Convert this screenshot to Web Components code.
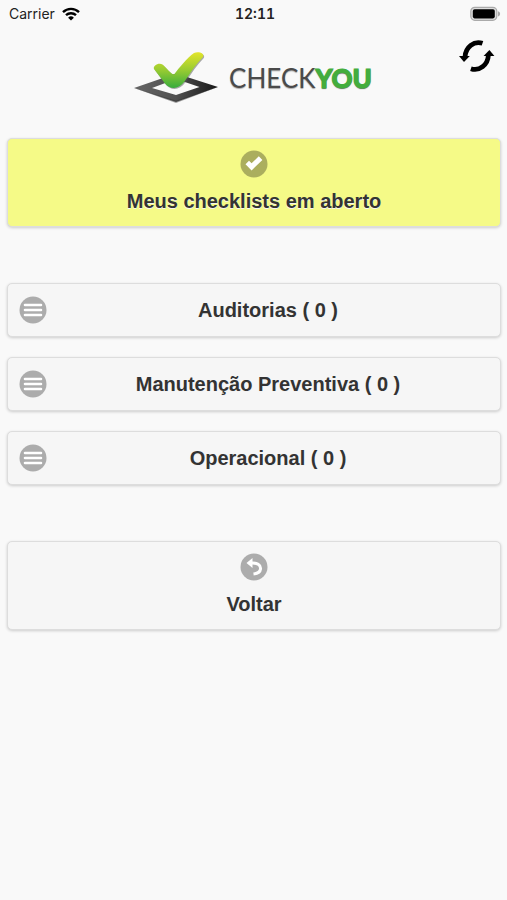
<!DOCTYPE html>
<html lang="pt-BR">
<head>
<meta charset="utf-8">
<meta name="viewport" content="width=device-width, initial-scale=1">
<title>CheckYou</title>
<style>
  body {
    margin: 0;
    min-height: 100vh;
    background: #f9f9f9;
    color: #333;
    font-family: "Liberation Sans", Arial, sans-serif;
  }
</style>
</head>
<body>
<checklist-page></checklist-page>

<script>
class StatusBar extends HTMLElement {
    connectedCallback() {
        this.attachShadow({ mode: 'open' });
        this.shadowRoot.innerHTML = `
      <style>
        :host {
          display: grid;
          grid-template-columns: 1fr auto 1fr;
          align-items: center;
          height: 28px;
          padding: 0 6px 0 9px;
          color: #222;
          font: 14px/28px Inter, sans-serif;
        }

        .carrier {
          display: flex;
          align-items: center;
          gap: 7px;
        }

        .time {
          font-weight: 600;
          font-variant-numeric: tabular-nums;
        }

        .battery {
          justify-self: end;
        }

        svg {
          display: block;
        }
      </style>

      <div class="carrier">
        <span>Carrier</span>
        <svg width="18" height="14" viewBox="0 0 18 14" fill="none" stroke="#000" stroke-width="2.4">
          <path d="M1 5.1a11.5 11.5 0 0 1 16 0"/>
          <path d="M4 8.2a7.2 7.2 0 0 1 10 0"/>
          <path d="M9 13.6 6.1 10.7a4.1 4.1 0 0 1 5.8 0Z" fill="#000" stroke="none"/>
        </svg>
      </div>
      <span class="time">12:11</span>
      <svg class="battery" width="31" height="16" viewBox="0 0 31 16">
        <rect x=".8" y="1.3" width="26" height="13" rx="4" fill="#ddd" stroke="#aaa" stroke-width="1.2"/>
        <rect x="2.8" y="3.2" width="22" height="9.2" rx="1.8" fill="#000"/>
        <path d="M28 5.2v5.2c2.8-.8 2.8-4.4 0-5.2Z" fill="#aaa"/>
      </svg>
    `;
    }
}

class BrandHeader extends HTMLElement {
    connectedCallback() {
        this.attachShadow({ mode: 'open' });
        this.shadowRoot.innerHTML = `
      <style>
        :host {
          display: grid;
          grid-template-columns: 1fr auto 1fr;
          align-items: start;
          height: 90px;
          padding: 0 12px 0 11px;
        }

        .logo {
          grid-column: 2;
          display: flex;
          align-items: center;
          gap: 11px;
          padding-top: 22px;
          color: #4a4a4a;
          font: 26px/56px Lato, sans-serif;
          text-decoration: none;
          text-shadow: 0 1px 1px #aaa;
        }

        .logo b {
          color: #43ad3d;
          font-weight: 900;
          -webkit-text-stroke: 1px #43ad3d;
          text-shadow: 0 1px 1px #666;
        }

        button {
          justify-self: end;
          margin: 10px 0 0;
          padding: 0;
          border: 0;
          background: none;
          cursor: pointer;
        }

        svg {
          display: block;
        }
      </style>

      <a class="logo" href="#inicio">
        <svg width="84" height="56" viewBox="0 0 84 56">
          <defs>
            <linearGradient id="frame" x1="0" x2="1">
              <stop offset="0" stop-color="#666"/>
              <stop offset=".5" stop-color="#505050"/>
              <stop offset="1" stop-color="#181818"/>
            </linearGradient>
            <linearGradient id="tick" x1="0" x2="0" y1="0" y2="1">
              <stop offset="0" stop-color="#e3e52a"/>
              <stop offset=".5" stop-color="#98cb32"/>
              <stop offset="1" stop-color="#38ac3c"/>
            </linearGradient>
          </defs>
          <path fill="url(#frame)" fill-rule="evenodd" d="M0 38 42 23.500 84 37 42 52ZM18 38 42 45 65.500 37 42 29Z"/>
          <path d="M0 38 42 50.500 84 37 42 53Z" fill="#333" opacity=".45"/>
          <path transform="translate(.8 1)" fill="#555" opacity=".5" d="M20 19C18.500 15.500 25 12 28.500 14.500C33 18 36 23.500 40 24.500C45 18 53 8 60 3C64 1 71 3 69 7C62 14 57 22 50.500 31.500C45 39.500 36 40 31 33.500Z"/>
          <path fill="url(#tick)" d="M20 19C18.500 15.500 25 12 28.500 14.500C33 18 36 23.500 40 24.500C45 18 53 8 60 3C64 1 71 3 69 7C62 14 57 22 50.500 31.500C45 39.500 36 40 31 33.500Z"/>
        </svg>
        <span>CHECK<b>YOU</b></span>
      </a>
      <button aria-label="Atualizar">
        <svg width="36" height="36" viewBox="0 0 36 36">
          <g id="half">
            <path d="M23.500 5.300C15 2.500 6.500 9 6 19" fill="none" stroke="#000" stroke-width="4.800"/>
            <path d="M0 18h10.800l-5.800 6Z"/>
          </g>
          <use href="#half" transform="rotate(180 17.700 18)"/>
        </svg>
      </button>
    `;
    }
}

const ICONS = {
    check: '<path d="m5.500 14.200 3.500-3.500 2.600 2.600 7.200-7 3.600 3.600-10.800 10.500Z" fill="#fff"/>',
    bars: '<path d="M6 9h16M6 14h16M6 19h16" stroke="#fff" stroke-width="2.600" stroke-linecap="round"/>',
    back: '<path d="M11 10c6-.5 10 2 9.500 6-.3 3-3 4.500-7 5" fill="none" stroke="#fff" stroke-width="3"/><path d="m6.500 10 6-5v10Z" fill="#fff"/>'
};

// icon: check | bars | back, layout: "top" puts the icon above the label
class MenuButton extends HTMLElement {
    connectedCallback() {
        this.attachShadow({ mode: 'open' });
        this.shadowRoot.innerHTML = `
      <style>
        :host {
          display: block;
        }

        button {
          display: grid;
          grid-template-columns: 28px 1fr;
          align-items: center;
          width: 100%;
          margin: 0;
          padding: 12px 11px;
          border: 1px solid #ddd;
          border-radius: 5px;
          background: #f6f6f6;
          box-shadow: 0 1px 3px rgba(0, 0, 0, 0.18);
          color: #333;
          font: bold 20px/26px "Liberation Sans", Arial, sans-serif;
          text-shadow: 0 1px 0 #f3f3f3;
          cursor: pointer;
        }

        :host([layout="top"]) button {
          grid-template-columns: 1fr;
          justify-items: center;
          gap: 10px;
          padding: 11px 16px 12px;
        }

        :host([highlight]) button {
          background: #f5fa87;
        }

        svg {
          display: block;
        }
      </style>

      <button>
        <svg width="28" height="28" viewBox="0 0 28 28">
          <circle cx="14" cy="14" r="13.500" fill="#000" fill-opacity=".3"/>
          ${ICONS[this.getAttribute('icon')]}
        </svg>
        <span><slot></slot></span>
      </button>
    `;
    }
}

class ChecklistPage extends HTMLElement {
    connectedCallback() {
        this.attachShadow({ mode: 'open' });
        this.shadowRoot.innerHTML = `
      <style>
        :host {
          display: block;
        }

        main {
          display: grid;
          gap: 56px;
          padding: 20px 6px 20px 7px;
        }

        .groups {
          display: grid;
          gap: 20px;
        }
      </style>

      <status-bar></status-bar>
      <brand-header></brand-header>
      <main>
        <menu-button icon="check" layout="top" highlight>Meus checklists em aberto</menu-button>
        <div class="groups">
          <menu-button icon="bars">Auditorias ( 0 )</menu-button>
          <menu-button icon="bars">Manutenção Preventiva ( 0 )</menu-button>
          <menu-button icon="bars">Operacional ( 0 )</menu-button>
        </div>
        <menu-button icon="back" layout="top">Voltar</menu-button>
      </main>
    `;
    }
}

customElements.define('status-bar', StatusBar);
customElements.define('brand-header', BrandHeader);
customElements.define('menu-button', MenuButton);
customElements.define('checklist-page', ChecklistPage);
</script>
</body>
</html>
